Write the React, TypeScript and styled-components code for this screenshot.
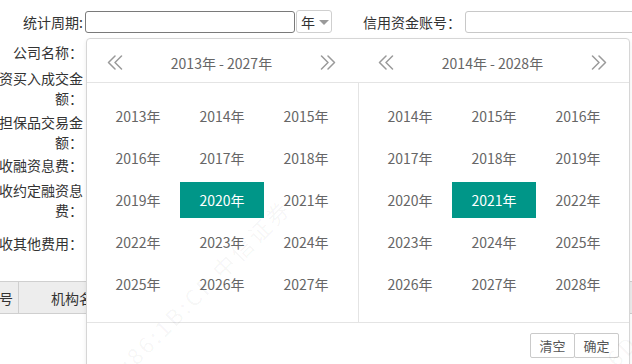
import React from "react";
import styled, { createGlobalStyle } from "styled-components";

const Global = createGlobalStyle`
  html, body { margin: 0; padding: 0; background: #fff; }
  body {
    font-family: "Noto Sans CJK SC", "Noto Sans", sans-serif;
    font-size: 14px;
    color: #333;
    overflow: hidden;
  }
  * { box-sizing: border-box; }
`;

const Page = styled.div`
  position: relative;
  width: 632px;
  height: 364px;
  overflow: hidden;
  background: #fff;
`;

const TopRow = styled.div`
  display: flex;
  align-items: center;
  height: 38px;
  padding-top: 5px;
  white-space: nowrap;
`;

const TopLabel = styled.label<{ $w?: number; $ml?: number }>`
  display: block;
  width: ${(p) => (p.$w ? `${p.$w}px` : "auto")};
  margin-left: ${(p) => p.$ml ?? 0}px;
  text-align: right;
  color: #333;
  line-height: 20px;
  flex: none;
`;

const TextInput = styled.div<{ $w: number; $ml: number; $dark?: boolean }>`
  width: ${(p) => p.$w}px;
  height: 22px;
  margin-left: ${(p) => p.$ml}px;
  border: 1px solid ${(p) => (p.$dark ? "#7a7a7a" : "#c8c8c8")};
  border-radius: 3px;
  background: #fff;
  flex: none;
`;

const Select = styled.div`
  width: 36px;
  height: 23px;
  margin-left: 1px;
  border: 1px solid #cfcfcf;
  border-radius: 3px;
  display: flex;
  align-items: center;
  padding-left: 4px;
  gap: 4px;
  color: #333;
  flex: none;
`;

const Caret = styled.span`
  width: 0;
  height: 0;
  border-left: 5px solid transparent;
  border-right: 5px solid transparent;
  border-top: 5px solid #9a9a9a;
  margin-top: 2px;
`;

const Form = styled.div`
  display: flex;
  flex-direction: column;
`;

const FormRow = styled.div<{ $h: number }>`
  display: flex;
  align-items: center;
  height: ${(p) => p.$h}px;
`;

const RowLabel = styled.div`
  width: 100px;
  margin-left: -17px;
  text-align: right;
  line-height: 20px;
  color: #333;
  flex: none;
`;

const TableHead = styled.div`
  display: flex;
  margin-top: 19px;
  margin-left: -30px;
  height: 33px;
  background: #ededed;
  border-top: 1px solid #cfcfcf;
  border-bottom: 1px solid #cfcfcf;
  width: 700px;
`;

const HeadCell = styled.div<{ $w: number; $align: "left" | "right"; $pad: number }>`
  width: ${(p) => p.$w}px;
  display: flex;
  align-items: center;
  justify-content: ${(p) => (p.$align === "right" ? "flex-end" : "flex-start")};
  padding-${(p) => (p.$align === "right" ? "right" : "left")}: ${(p) => p.$pad}px;
  border-right: 1px solid #cfcfcf;
  color: #333;
  white-space: nowrap;
  flex: none;
`;

const Popup = styled.div`
  position: absolute;
  left: 86px;
  top: 38px;
  width: 544px;
  height: 340px;
  background: #fff;
  border: 1px solid #d6d6d6;
  border-radius: 4px;
  box-shadow: 0 2px 4px rgba(0, 0, 0, 0.08);
  display: flex;
  flex-direction: column;
`;

const Panels = styled.div`
  display: flex;
`;

const Panel = styled.div`
  display: flex;
  flex-direction: column;
  width: 271px;
`;

const Header = styled.div`
  height: 44px;
  padding: 4px 22px 0 20px;
  display: flex;
  align-items: center;
  justify-content: space-between;
  border-bottom: 1px solid #e4e4e4;
  color: #666;
`;

const Title = styled.span`
  color: #666;
  font-size: 14px;
`;

const Grid = styled.div<{ $divider?: boolean }>`
  display: grid;
  grid-template-columns: repeat(3, 84px);
  grid-auto-rows: 36px;
  row-gap: 6px;
  padding: 15px 0 20px 9px;
  border-left: ${(p) => (p.$divider ? "1px solid #e4e4e4" : "none")};
  border-bottom: 1px solid #e4e4e4;
  height: 240px;
`;

const Cell = styled.div<{ $active?: boolean }>`
  display: flex;
  align-items: center;
  justify-content: center;
  color: ${(p) => (p.$active ? "#fff" : "#666")};
  background: ${(p) => (p.$active ? "#009688" : "transparent")};
  font-size: 14px;
`;

const Footer = styled.div`
  display: flex;
  justify-content: flex-end;
  padding: 10px 10px 0 0;
`;

const Btn = styled.div<{ $first?: boolean }>`
  width: 45px;
  height: 25px;
  border: 1px solid #cacaca;
  border-radius: 2px;
  margin-left: ${(p) => (p.$first ? 0 : -1)}px;
  display: flex;
  align-items: center;
  justify-content: center;
  color: #555;
  font-size: 13px;
  background: #fff;
`;

const Watermark = styled.div<{ $x: number; $y: number }>`
  position: absolute;
  left: ${(p) => p.$x}px;
  top: ${(p) => p.$y}px;
  transform: rotate(-45deg);
  transform-origin: left top;
  font-size: 22px;
  color: rgba(0, 0, 0, 0.045);
  white-space: nowrap;
  pointer-events: none;
  letter-spacing: 3px;
`;

const Chevrons = ({ dir }: { dir: "left" | "right" }) => (
  <svg width="16" height="15" viewBox="0 0 16 15" fill="none">
    <g
      stroke="#9a9a9a"
      strokeWidth="1.5"
      strokeLinecap="round"
      strokeLinejoin="round"
      transform={dir === "right" ? "translate(16 0) scale(-1 1)" : undefined}
    >
      <polyline points="8,1 1.5,7.5 8,14" />
      <polyline points="14.5,1 8,7.5 14.5,14" />
    </g>
  </svg>
);

const YearPanel = ({ start, active, divider }: { start: number; active: number; divider?: boolean }) => {
  const years = Array.from({ length: 15 }, (_, i) => start + i);
  return (
    <Panel>
      <Header>
        <Chevrons dir="left" />
        <Title>
          {start}年 - {start + 14}年
        </Title>
        <Chevrons dir="right" />
      </Header>
      <Grid $divider={divider}>
        {years.map((y) => (
          <Cell key={y} $active={y === active}>
            {y}年
          </Cell>
        ))}
      </Grid>
    </Panel>
  );
};

const rows: { label: string; h: number }[] = [
  { label: "公司名称：", h: 28 },
  { label: "融资买入成交金额：", h: 43 },
  { label: "划担保品交易金额：", h: 45 },
  { label: "应收融资息费：", h: 22 },
  { label: "应收约定融资息费：", h: 48 },
  { label: "应收其他费用：", h: 38 },
];

export default function App() {
  return (
    <Page>
      <Global />
      <TopRow>
        <TopLabel $w={83}>统计周期:</TopLabel>
        <TextInput $w={210} $ml={2} $dark />
        <Select>
          年<Caret />
        </Select>
        <TopLabel $ml={31}>信用资金账号：</TopLabel>
        <TextInput $w={200} $ml={4} />
      </TopRow>
      <Form>
        {rows.map((r) => (
          <FormRow key={r.label} $h={r.h}>
            <RowLabel>{r.label}</RowLabel>
          </FormRow>
        ))}
      </Form>
      <TableHead>
        <HeadCell $w={49} $align="right" $pad={5}>
          序号
        </HeadCell>
        <HeadCell $w={200} $align="left" $pad={32}>
          机构名称
        </HeadCell>
      </TableHead>
      <Popup>
        <Panels>
          <YearPanel start={2013} active={2020} />
          <YearPanel start={2014} active={2021} divider />
        </Panels>
        <Footer>
          <Btn $first>清空</Btn>
          <Btn>确定</Btn>
        </Footer>
      </Popup>
      <Watermark $x={88} $y={378}>D0:86:1B:CF  中信证券</Watermark>
      <Watermark $x={598} $y={350}>6D:86</Watermark>
    </Page>
  );
}
